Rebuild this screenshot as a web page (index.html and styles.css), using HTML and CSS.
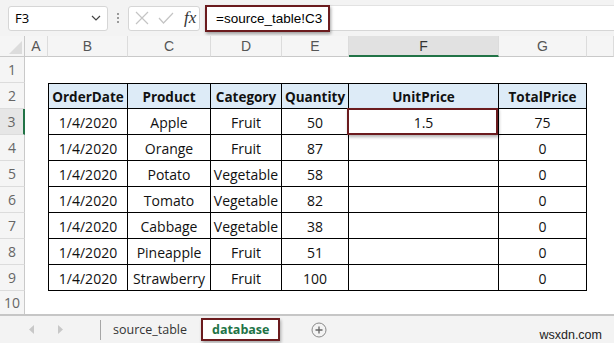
FILE: index.html
```html
<!DOCTYPE html>
<html>
<head>
<meta charset="utf-8" />
<title>database - Excel</title>
<link rel="stylesheet" href="styles.css">
</head>
<body>
<div class="app">

<div class="topbar">
  <div class="namebox">
    <span>F3</span>
    <svg width="10" height="6" viewBox="0 0 10 6"><path d="M1 1 L5 5 L9 1" fill="none" stroke="#444" stroke-width="1.2"/></svg>
  </div>
  <div class="dots"><i></i><i></i><i></i></div>
  <div class="fbuttons">
    <svg width="14" height="14" viewBox="0 0 14 14"><path d="M1 1 L13 13 M13 1 L1 13" stroke="#c4c4c4" stroke-width="1.2"/></svg>
    <svg width="16" height="12" viewBox="0 0 16 12"><path d="M1 6 L5.5 11 L15 1" fill="none" stroke="#c4c4c4" stroke-width="1.2"/></svg>
    <span class="fx">fx</span>
  </div>
  <div class="formula">
    <div class="formula-text">=source_table!C3</div>
  </div>
</div>

<div class="sheet">
  <!-- column headers -->
  <div class="corner"></div>
  <div class="ch">A</div>
  <div class="ch">B</div>
  <div class="ch">C</div>
  <div class="ch">D</div>
  <div class="ch">E</div>
  <div class="ch active">F</div>
  <div class="ch">G</div>
  <div class="ch"></div>

  <!-- row 1 -->
  <div class="rh">1</div>
  <div></div><div></div><div></div><div></div><div></div><div></div><div></div><div></div>

  <!-- row 2 -->
  <div class="rh">2</div>
  <div></div>
  <div class="t th first">OrderDate</div>
  <div class="t th">Product</div>
  <div class="t th">Category</div>
  <div class="t th">Quantity</div>
  <div class="t th">UnitPrice</div>
  <div class="t th">TotalPrice</div>
  <div></div>

  <!-- row 3 -->
  <div class="rh active">3</div>
  <div></div>
  <div class="t first">1/4/2020</div>
  <div class="t">Apple</div>
  <div class="t">Fruit</div>
  <div class="t">50</div>
  <div class="t selected">1.5</div>
  <div class="t">75</div>
  <div></div>

  <!-- row 4 -->
  <div class="rh">4</div>
  <div></div>
  <div class="t first">1/4/2020</div>
  <div class="t">Orange</div>
  <div class="t">Fruit</div>
  <div class="t">87</div>
  <div class="t"></div>
  <div class="t">0</div>
  <div></div>

  <!-- row 5 -->
  <div class="rh">5</div>
  <div></div>
  <div class="t first">1/4/2020</div>
  <div class="t">Potato</div>
  <div class="t">Vegetable</div>
  <div class="t">58</div>
  <div class="t"></div>
  <div class="t">0</div>
  <div></div>

  <!-- row 6 -->
  <div class="rh">6</div>
  <div></div>
  <div class="t first">1/4/2020</div>
  <div class="t">Tomato</div>
  <div class="t">Vegetable</div>
  <div class="t">82</div>
  <div class="t"></div>
  <div class="t">0</div>
  <div></div>

  <!-- row 7 -->
  <div class="rh">7</div>
  <div></div>
  <div class="t first">1/4/2020</div>
  <div class="t">Cabbage</div>
  <div class="t">Vegetable</div>
  <div class="t">38</div>
  <div class="t"></div>
  <div class="t">0</div>
  <div></div>

  <!-- row 8 -->
  <div class="rh">8</div>
  <div></div>
  <div class="t first">1/4/2020</div>
  <div class="t">Pineapple</div>
  <div class="t">Fruit</div>
  <div class="t">51</div>
  <div class="t"></div>
  <div class="t">0</div>
  <div></div>

  <!-- row 9 -->
  <div class="rh">9</div>
  <div></div>
  <div class="t first">1/4/2020</div>
  <div class="t">Strawberry</div>
  <div class="t">Fruit</div>
  <div class="t">100</div>
  <div class="t"></div>
  <div class="t">0</div>
  <div></div>

  <!-- row 10 -->
  <div class="rh last">10</div>
</div>

<div class="tabbar">
  <div class="arrows">
    <svg width="6" height="9" viewBox="0 0 6 9"><path d="M5 0 L0 4.5 L5 9 Z" fill="#c8c8c8"/></svg>
    <svg width="6" height="9" viewBox="0 0 6 9"><path d="M1 0 L6 4.5 L1 9 Z" fill="#c8c8c8"/></svg>
  </div>
  <div class="sep"></div>
  <div class="tab">source_table</div>
  <div class="tab current">database</div>
  <svg class="add" width="16" height="16" viewBox="0 0 16 16"><circle cx="8" cy="8" r="7" fill="none" stroke="#8a8a8a" stroke-width="1"/><path d="M8 4.5 V11.5 M4.5 8 H11.5" stroke="#666" stroke-width="1.3"/></svg>
  <div class="brand">wsxdn.com</div>
</div>

</div>
</body>
</html>
```

FILE: styles.css
```css
* {
  box-sizing: border-box;
  margin: 0;
  padding: 0;
}
body {
  background: #fff;
  font-family: 'Open Sans', 'Noto Sans', sans-serif;
  overflow: hidden;
}
.app {
  display: flex;
  flex-direction: column;
  height: 343px;
  width: 614px;
}

/* formula bar */
.topbar {
  align-items: center;
  background: #f3f3f3;
  display: flex;
  flex: 0 0 36px;
  padding-left: 8px;
}
.namebox {
  align-items: center;
  background: #fff;
  border: 1px solid #d6d6d6;
  border-radius: 3px;
  display: flex;
  font-size: 13px;
  height: 25px;
  justify-content: space-between;
  padding: 0 6px 0 6px;
  width: 100px;
}
.dots {
  display: flex;
  flex-direction: column;
  gap: 2px;
  margin: 0 9px 0 9px;
}
.dots i {
  background: #9a9a9a;
  display: block;
  height: 2px;
  width: 2px;
}
.fbuttons {
  align-items: center;
  background: #fff;
  border: 1px solid #d6d6d6;
  border-radius: 3px;
  display: flex;
  gap: 9px;
  height: 25px;
  padding-left: 6px;
  width: 72px;
}
.fx {
  color: #333;
  font-family: 'Liberation Serif', serif;
  font-size: 17px;
  font-style: italic;
  margin-left: 1px;
}
.formula {
  align-items: center;
  background: #fff;
  border-bottom: 1px solid #d6d6d6;
  border-top: 1px solid #e2e2e2;
  display: flex;
  flex: 1;
  height: 26px;
  margin-left: 5px;
}
.formula-text {
  border: 2px solid #6b1b1e;
  box-shadow: 1px 2px 3px rgba(0,0,0,.35);
  font-family: 'Liberation Sans', Arial, sans-serif;
  font-size: 13.5px;
  height: 27px;
  line-height: 23px;
  padding-left: 9px;
  width: 125px;
}

/* grid */
.sheet {
  display: grid;
  flex: 1;
  font-size: 13px;
  grid-template-columns: 25px 23px 80px 83px 71px 67px 150px 88px 1fr;
  grid-template-rows: 21px repeat(9, 26px) 1fr;
}
.corner {
  background: #f5f5f5;
  border-bottom: 1px solid #c9c9c9;
  border-right: 1px solid #c9c9c9;
  position: relative;
}
.corner::after {
  border-bottom: 13px solid #dcdcdc;
  border-left: 13px solid transparent;
  bottom: 2px;
  content: '';
  position: absolute;
  right: 2px;
}
.ch {
  align-items: center;
  background: #f5f5f5;
  border-bottom: 1px solid #c9c9c9;
  border-right: 1px solid #dcdcdc;
  color: #555;
  display: flex;
  font-family: 'Liberation Sans', Arial, sans-serif;
  font-size: 14px;
  justify-content: center;
}
.ch.active {
  background: #e1e1e1;
  border-bottom: 2px solid #217346;
  color: #333;
}
.rh {
  align-items: center;
  background: #f5f5f5;
  border-bottom: 1px solid #dcdcdc;
  border-right: 1px solid #c9c9c9;
  color: #666;
  display: flex;
  font-size: 14px;
  grid-column: 1;
  justify-content: center;
}
.rh.active {
  background: #e6e6e6;
  border-right: 2px solid #217346;
}
.rh.last {
  align-items: flex-start;
  border-bottom: 0;
  padding-top: 2px;
}
.t {
  align-items: center;
  border-bottom: 1px solid #000;
  border-right: 1px solid #000;
  color: #111;
  display: flex;
  font-size: 14px;
  justify-content: center;
  padding-top: 1px;
}
.t.first {
  border-left: 1px solid #000;
}
.th {
  background: #ddebf7;
  border-top: 1px solid #000;
  font-size: 13.5px;
  font-weight: 700;
}
.t.selected {
  position: relative;
}
.t.selected::after {
  border: 2px solid #6b1b1e;
  bottom: -1px;
  box-shadow: 1px 2px 3px rgba(0,0,0,.3);
  content: '';
  left: -2px;
  position: absolute;
  right: 0;
  top: -1px;
}

/* sheet tabs */
.tabbar {
  align-items: center;
  background: #f3f3f3;
  border-top: 2px solid #c6c6c6;
  display: flex;
  flex: 0 0 29px;
}
.arrows {
  align-items: center;
  display: flex;
  gap: 22px;
  margin-left: 29px;
  width: 71px;
}
.sep {
  background: #a6a6a6;
  height: 20px;
  width: 1px;
}
.tab {
  color: #333;
  font-size: 12.5px;
  padding: 0 12px;
}
.tab.current {
  background: #fff;
  border: 2px solid #6b1b1e;
  box-shadow: 1px 2px 3px rgba(0,0,0,.3);
  color: #217346;
  font-weight: 700;
  height: 23px;
  line-height: 19px;
  margin-left: 2px;
  padding: 0 9px;
}
.add {
  margin-left: 31px;
}
.brand {
  color: #222;
  font-family: 'Liberation Sans', Arial, sans-serif;
  font-size: 12.5px;
  margin-left: auto;
  margin-right: 12px;
  margin-top: 10px;
}
```
